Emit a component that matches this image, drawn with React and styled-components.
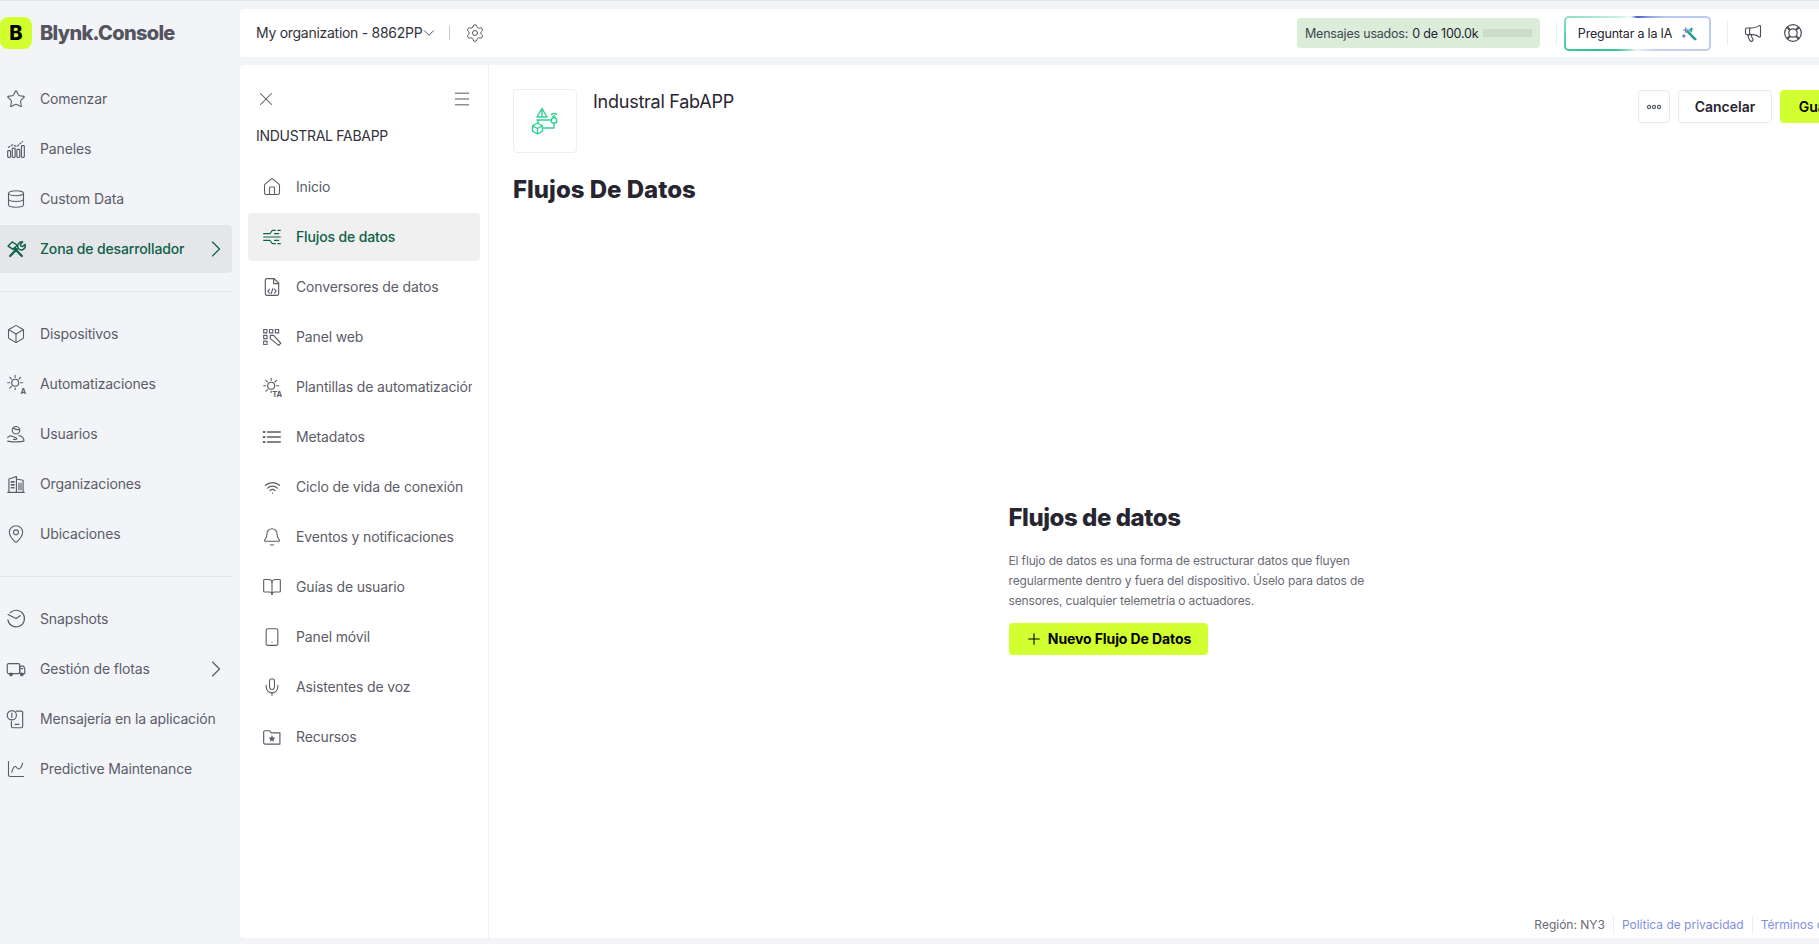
import React from 'react';
import styled, { createGlobalStyle } from 'styled-components';
import {
  Star, Database, Box, MapPin, House, X, Menu, ChevronDown, ChevronRight, Settings, Bell,
  BookOpen, Mic, Smartphone, Plus, Megaphone, Wifi, ChartSpline,
} from 'lucide-react';

const Svg = ({ children, size = 20, ...rest }) => (
  <svg width={size} height={size} viewBox="0 0 24 24" fill="none" stroke="currentColor"
    strokeWidth="1.4" strokeLinecap="round" strokeLinejoin="round" {...rest}>
    {children}
  </svg>
);

const BarsIcon = () => (
  <Svg>
    <rect x="2" y="14" width="3.5" height="8" rx="1" />
    <rect x="7.5" y="11" width="3.5" height="11" rx="1" />
    <rect x="13" y="12.5" width="3.5" height="9.5" rx="1" />
    <rect x="18.5" y="8" width="3.5" height="14" rx="1" />
    <path d="M3 10l5-3 5 2 7-6" strokeDasharray="2 2" />
  </Svg>
);

const ToolsIcon = () => (
  <Svg strokeWidth="1.7">
    <path d="M2.500 8.500l5-5 6 4-5 5z" />
    <path d="M10 11l9 9.500M5 20.500l8-8.500" strokeWidth="2.600" />
    <path d="M20 3.500l-3 3 1 2 2 .5 3-2.500a5 5 0 0 1-7 6 5 5 0 0 1-1-7 5 5 0 0 1 5-2z" />
  </Svg>
);

const SunLabelIcon = ({ label }) => (
  <Svg>
    <circle cx="11" cy="10.5" r="4.2" />
    <path d="M11 1.5v2.5M2 10.5h2.5M17.5 10.5H20M4.6 4.1l1.8 1.8M17.4 4.1l-1.8 1.8M4.6 16.9l1.8-1.8M11 17v1.5" />
    <text x="24" y="24" textAnchor="end" fontSize="9" fontWeight="700" fontFamily="Inter, sans-serif"
      fill="currentColor" stroke="none">{label}</text>
  </Svg>
);

const UsersIcon = () => (
  <Svg>
    <circle cx="12" cy="7.5" r="4.5" />
    <path d="M8.5 4.5c2 2 5 2.5 7.500 2" />
    <path d="M2 16c2-2 4-2 6-1l4 1.500c1.500.5 1.500 2-.5 2H9" />
    <path d="M2 20.500c3 1 15 1.500 19.500 0 .5-3-2-6-6-6.500" />
  </Svg>
);

const BuildingIcon = () => (
  <Svg>
    <path d="M2 22h20M3.500 22V6l9-3v19M12.500 6l8 1.500V22" />
    <path d="M6.500 9.500h3M6.500 13h3M6.500 16.500h3" strokeWidth="2" />
    <path d="M15.500 11v8M18 11v8" />
  </Svg>
);

const SnapshotIcon = () => (
  <Svg>
    <path d="M5 4.500A10 10 0 1 1 2.300 13" />
    <path d="M2.500 6.500L12 11.500l5-3.500" />
  </Svg>
);

const FleetIcon = () => (
  <Svg>
    <rect x="1.500" y="5.500" width="15" height="12" rx="2" />
    <path d="M16.500 8.500h4.500l1.500 3v6h-6z" />
    <circle cx="6" cy="18.500" r="1.500" fill="currentColor" />
    <circle cx="19" cy="18.500" r="1.500" fill="currentColor" />
    <path d="M18 11.500h2" />
  </Svg>
);

const MessagesIcon = () => (
  <Svg>
    <path d="M12 2.500h6.500A1.500 1.500 0 0 1 20 4v17a1.500 1.500 0 0 1-1.500 1.500H8A1.500 1.500 0 0 1 6.500 21v-6" />
    <circle cx="7" cy="7.500" r="5.500" />
    <path d="M7 5v5M11 18.500h4.500" />
  </Svg>
);

const FlowsIcon = () => (
  <Svg>
    <path d="M2 8h7c2 0 2-4 4-4h3M2 12h20M2 16h7c2 0 2 4 4 4h3M19 4h3M19 20h3M15 8h5M15 16h5" />
  </Svg>
);

const WebPanelIcon = () => (
  <Svg>
    <path d="M2 3h4v4H2zM9 3h4v4H9zM16 3h4v4h-4zM2 10h4v4H2zM2 17h4v4H2z" strokeDasharray="2.500 1" />
    <path d="M10 10l4 0 8.500 9.500-2.500 2.500L10 14z" />
  </Svg>
);

const FolderStarIcon = () => (
  <Svg>
    <path d="M2 6a1.500 1.500 0 0 1 1.500-1.500H9l2 2.500h10.500V20.500h-18A1.500 1.500 0 0 1 2 19z" />
    <path d="M12 10.500l1.100 2.300 2.400.3-1.800 1.700.5 2.400-2.200-1.200-2.200 1.200.5-2.400-1.800-1.700 2.400-.3z"
      fill="currentColor" strokeWidth="0.6" />
  </Svg>
);

const FileCodeIcon = () => (
  <Svg>
    <path d="M14.500 2H6a2 2 0 0 0-2 2v16a2 2 0 0 0 2 2h12a2 2 0 0 0 2-2V7.500z" />
    <path d="M14 2v6h6" />
    <path d="M9 14.500l-2 2.500 2 2.500M15 14.500l2 2.500-2 2.500M13 14l-2 6" />
  </Svg>
);

const MetaIcon = () => (
  <Svg strokeWidth="1.6">
    <path d="M6.500 6h15.500M6.500 12h15.500M6.500 18h15.500" />
    <path d="M2 6h1M2 12h1M2 18h1" strokeWidth="2.400" />
  </Svg>
);

const BuoyIcon = () => (
  <Svg size={20} strokeWidth="1.5">
    <circle cx="12" cy="12" r="10" />
    <circle cx="12" cy="12" r="5" />
    <path d="M5 5l3.500 3.500M19 5l-3.500 3.500M5 19l3.500-3.500M19 19l-3.500-3.500" strokeWidth="2.600" strokeLinecap="butt" />
  </Svg>
);

const RingDotsIcon = () => (
  <svg width="16" height="16" viewBox="0 0 16 16" fill="none" stroke="currentColor" strokeWidth="1.100">
    <circle cx="3" cy="8" r="1.600" />
    <circle cx="8" cy="8" r="1.600" />
    <circle cx="13" cy="8" r="1.600" />
  </svg>
);

const WandIcon = () => (
  <svg width="15" height="15" viewBox="0 0 24 24" fill="none" strokeLinecap="round" strokeWidth="2.200">
    <path d="M9 9l12 12" stroke="#2f9a98" strokeWidth="4.500" />
    <path d="M6 3v7M2.500 6.500h7M15 3v4M13 5h4M3 14v4M1 16h4" stroke="#6f80d0" />
    <path d="M12 6l3 3" stroke="#2bc392" strokeWidth="3" />
  </svg>
);

const FlowLogo = () => (
  <svg width="30" height="30" viewBox="0 0 30 30" fill="none" stroke="#35cf95" strokeWidth="1.400"
    strokeLinecap="round" strokeLinejoin="round">
    <path d="M12 2.500l5 8.500H7zM12 2.500V11" />
    <path d="M7 14h14M8 14v3" />
    <circle cx="24" cy="14.500" r="2.800" />
    <path d="M21.500 8.500a3.500 3.500 0 0 1 5 0M22.800 10.500a2 2 0 0 1 2.400 0" />
    <path d="M24 17.500V22H13" />
    <path d="M7.500 17l5 2.800v5.400l-5 2.800-5-2.800v-5.400zM2.500 19.800l5 2.700 5-2.700M7.500 22.500V28" />
  </svg>
);

const lucide = { size: 20, strokeWidth: 1.3 };

const primaryNav = [
  [
    { label: 'Comenzar', icon: <Star {...lucide} /> },
    { label: 'Paneles', icon: <BarsIcon /> },
    { label: 'Custom Data', icon: <Database {...lucide} /> },
    { label: 'Zona de desarrollador', icon: <ToolsIcon />, active: true, arrow: true },
  ],
  [
    { label: 'Dispositivos', icon: <Box {...lucide} /> },
    { label: 'Automatizaciones', icon: <SunLabelIcon label="A" /> },
    { label: 'Usuarios', icon: <UsersIcon /> },
    { label: 'Organizaciones', icon: <BuildingIcon /> },
    { label: 'Ubicaciones', icon: <MapPin {...lucide} /> },
  ],
  [
    { label: 'Snapshots', icon: <SnapshotIcon /> },
    { label: 'Gestión de flotas', icon: <FleetIcon />, arrow: true },
    { label: 'Mensajería en la aplicación', icon: <MessagesIcon /> },
    { label: 'Predictive Maintenance', icon: <ChartSpline {...lucide} /> },
  ],
];

const templateNav = [
  { label: 'Inicio', icon: <House {...lucide} /> },
  { label: 'Flujos de datos', icon: <FlowsIcon />, active: true },
  { label: 'Conversores de datos', icon: <FileCodeIcon /> },
  { label: 'Panel web', icon: <WebPanelIcon /> },
  { label: 'Plantillas de automatización', icon: <SunLabelIcon label="TA" /> },
  { label: 'Metadatos', icon: <MetaIcon /> },
  { label: 'Ciclo de vida de conexión', icon: <Wifi size={17} strokeWidth={1.7} /> },
  { label: 'Eventos y notificaciones', icon: <Bell {...lucide} /> },
  { label: 'Guías de usuario', icon: <BookOpen {...lucide} /> },
  { label: 'Panel móvil', icon: <Smartphone {...lucide} /> },
  { label: 'Asistentes de voz', icon: <Mic {...lucide} /> },
  { label: 'Recursos', icon: <FolderStarIcon /> },
];

export default function App() {
  return (
    <Page>
      <GlobalStyle />
      <Sidebar>
        <Brand>
          <BrandMark>B</BrandMark>
          <BrandName>Blynk.Console</BrandName>
        </Brand>
        {primaryNav.map((group, index) => (
          <NavGroup key={index}>
            {group.map((item) => (
              <NavItem key={item.label} $active={item.active}>
                <NavIcon>{item.icon}</NavIcon>
                <NavLabel>{item.label}</NavLabel>
                {item.arrow && <ChevronRight size={28} strokeWidth={1} />}
              </NavItem>
            ))}
          </NavGroup>
        ))}
      </Sidebar>

      <Content>
        <TopBar>
          <OrgName>My organization - 8862PP</OrgName>
          <ChevronDown size={18} strokeWidth={1.2} color="#44444e" />
          <TopDivider />
          <GearButton><Settings size={20} strokeWidth={1.2} /></GearButton>
          <Usage>
            Mensajes usados: <UsageCount>0 de 100.0k</UsageCount>
            <UsageBar />
          </Usage>
          <BarDivider />
          <AskButton>Preguntar a la IA <WandIcon /></AskButton>
          <BarDivider />
          <TopIcons>
            <Megaphone size={20} strokeWidth={1.4} />
            <BuoyIcon />
          </TopIcons>
        </TopBar>

        <Panel>
          <TemplateNav>
            <NavHead>
              <X size={22} strokeWidth={1.1} />
              <Menu size={20} strokeWidth={1.2} />
            </NavHead>
            <TemplateName>INDUSTRAL FABAPP</TemplateName>
            {templateNav.map((item) => (
              <TemplateItem key={item.label} $active={item.active}>
                <NavIcon>{item.icon}</NavIcon>
                <NavLabel>{item.label}</NavLabel>
              </TemplateItem>
            ))}
          </TemplateNav>

          <Main>
            <MainHead>
              <LogoBox><FlowLogo /></LogoBox>
              <TemplateTitle>Industral FabAPP</TemplateTitle>
              <Actions>
                <MoreButton><RingDotsIcon /></MoreButton>
                <OutlineButton>Cancelar</OutlineButton>
                <LimeButton>Guardar</LimeButton>
              </Actions>
            </MainHead>
            <PageTitle>Flujos De Datos</PageTitle>
            <EmptyArea>
              <EmptyBlock>
                <EmptyTitle>Flujos de datos</EmptyTitle>
                <EmptyText>
                  El flujo de datos es una forma de estructurar datos que fluyen regularmente dentro y
                  fuera del dispositivo. Úselo para datos de sensores, cualquier telemetría o actuadores.
                </EmptyText>
                <NewButton><Plus size={18} strokeWidth={1.5} /> Nuevo Flujo De Datos</NewButton>
              </EmptyBlock>
            </EmptyArea>
            <Footer>
              <FootItem>Región: NY3</FootItem>
              <FootLink>Política de privacidad</FootLink>
              <FootLink>Términos de servicio</FootLink>
            </Footer>
          </Main>
        </Panel>
      </Content>
    </Page>
  );
}

const GlobalStyle = createGlobalStyle`
  html, body {
    margin: 0;
    height: 100%;
    overflow: hidden;
    background: #f2f4f8;
    font-family: Inter, "Liberation Sans", sans-serif;
    color: #272530;
  }
  * {
    box-sizing: border-box;
  }
`

const Page = styled.div`
  display: flex;
  gap: 8px;
  height: 944px;
  border-top: 1px solid #e1e4ee;
  overflow: hidden;
`

const Sidebar = styled.aside`
  flex: none;
  width: 232px;
`

const Brand = styled.div`
  display: flex;
  align-items: center;
  gap: 8px;
  height: 32px;
  margin: 16px 0 26px;
`

const BrandMark = styled.div`
  display: flex;
  align-items: center;
  justify-content: center;
  width: 32px;
  height: 32px;
  border-radius: 8px;
  background: #d1ff2f;
  color: #000;
  font-size: 20px;
  font-weight: 800;
`

const BrandName = styled.div`
  color: #55555f;
  font-size: 20px;
  font-weight: 800;
  letter-spacing: -0.7px;
`

const NavGroup = styled.div`
  display: flex;
  flex-direction: column;
  gap: 2px;
  padding-bottom: 18px;
  margin-bottom: 18px;
  border-bottom: 1px solid #e4e6ec;

  &:last-child {
    border-bottom: 0;
  }
`

const NavItem = styled.div`
  display: flex;
  align-items: center;
  gap: 14px;
  height: 48px;
  padding: 0 2px 0 6px;
  border-radius: 0 4px 4px 0;
  font-size: 14px;
  letter-spacing: -0.14px;
  color: ${(p) => (p.$active ? '#0c6146' : '#5c5c68')};
  background: ${(p) => (p.$active ? '#e4e6ea' : 'transparent')};
  font-weight: ${(p) => (p.$active ? 500 : 400)};
`

const NavIcon = styled.span`
  display: flex;
  flex: none;
  align-items: center;
  justify-content: center;
  width: 20px;
`

const NavLabel = styled.span`
  flex: 1;
  min-width: 0;
  padding-bottom: 2px;
  white-space: nowrap;
  overflow: hidden;
`

const Content = styled.div`
  flex: 1;
  min-width: 0;
  padding-top: 8px;
`

const TopBar = styled.header`
  display: flex;
  align-items: center;
  height: 48px;
  padding: 0 16px;
  background: #fff;
  border-radius: 4px 0 0 4px;
`

const OrgName = styled.div`
  margin: 0 -2px 2px 0;
  font-size: 14px;
  letter-spacing: -0.28px;
  color: #33323c;
`

const TopDivider = styled.span`
  width: 1px;
  height: 14px;
  margin: 0 15px 0 11px;
  background: #c9cbd2;
`

const GearButton = styled.span`
  display: flex;
  color: #55555f;
`

const Usage = styled.div`
  display: flex;
  align-items: center;
  gap: 4px;
  height: 30px;
  margin-left: auto;
  padding: 0 8px;
  width: 243px;
  border-radius: 4px;
  background: #dbecd9;
  font-size: 12.500px;
  letter-spacing: -0.2px;
  color: #3e4750;
  white-space: nowrap;
`

const UsageCount = styled.span`
  color: #1f2430;
`

const UsageBar = styled.span`
  width: 49px;
  height: 8px;
  margin-left: auto;
  background: #cbdcc9;
`

const BarDivider = styled.span`
  width: 1px;
  height: 24px;
  margin: 0 7px 0 16px;
  background: #eceef2;
`

const AskButton = styled.button`
  display: flex;
  align-items: center;
  justify-content: center;
  gap: 10px;
  width: 147px;
  height: 35px;
  padding: 0;
  border: 2px solid transparent;
  border-radius: 5px;
  background:
    linear-gradient(#fff, #fff) padding-box,
    conic-gradient(#4a63d6 5deg, #8c9fe6 35deg, #b9c6ef 60deg, #c7d2f2 130deg, #f2f6f8 185deg,
      #3cc79a 232deg, #2bc392 250deg, #72d9b8 275deg, #b6ebd8 295deg, #f5fbf9 338deg, #4a63d6 358deg) border-box;
  font-family: inherit;
  font-size: 12.500px;
  letter-spacing: -0.2px;
  color: #272530;
`

const TopIcons = styled.div`
  display: flex;
  align-items: center;
  gap: 20px;
  margin-left: 8px;
  color: #4e4e58;
`

const Panel = styled.div`
  display: flex;
  height: 873px;
  margin-top: 8px;
  background: #fff;
  border-radius: 4px 0 0 4px;
  overflow: hidden;
`

const TemplateNav = styled.nav`
  flex: none;
  width: 249px;
  padding: 0 8px;
  border-right: 1px solid #f0f1f4;
`

const NavHead = styled.div`
  display: flex;
  align-items: center;
  justify-content: space-between;
  height: 22px;
  margin: 23px 8px 0 7px;
  color: #55555f;
`

const TemplateName = styled.div`
  margin: 16px 0 17px 8px;
  height: 20px;
  line-height: 20px;
  font-size: 14px;
  letter-spacing: -0.3px;
  color: #33323c;
`

const TemplateItem = styled.div`
  display: flex;
  align-items: center;
  gap: 14px;
  height: 48px;
  margin-bottom: 2px;
  padding: 0 8px 0 14px;
  border-radius: 4px;
  font-size: 14px;
  letter-spacing: -0.14px;
  color: ${(p) => (p.$active ? '#0c6146' : '#5c5c68')};
  background: ${(p) => (p.$active ? '#f0f0f1' : 'transparent')};
  font-weight: ${(p) => (p.$active ? 500 : 400)};
`

const Main = styled.main`
  display: flex;
  flex: none;
  flex-direction: column;
  width: 1400px;
`

const MainHead = styled.div`
  display: flex;
  align-items: flex-start;
  padding: 24px 17px 0 24px;
`

const LogoBox = styled.div`
  display: flex;
  align-items: center;
  justify-content: center;
  width: 64px;
  height: 64px;
  border: 1px solid #eeeff2;
  border-radius: 4px;
`

const TemplateTitle = styled.div`
  margin: 1px 0 0 16px;
  font-size: 18px;
  line-height: 24px;
  letter-spacing: -0.25px;
  color: #272530;
`

const Actions = styled.div`
  display: flex;
  gap: 8px;
  margin: 1px 0 0 auto;
`

const MoreButton = styled.button`
  display: flex;
  align-items: center;
  justify-content: center;
  width: 32px;
  height: 33px;
  padding: 0;
  border: 1px solid #e8e9ee;
  border-radius: 4px;
  background: #fff;
  color: #4d5260;
`

const OutlineButton = styled.button`
  width: 94px;
  height: 33px;
  padding: 0;
  border: 1px solid #e8e9ee;
  border-radius: 4px;
  background: #fff;
  font-family: inherit;
  font-size: 14px;
  font-weight: 600;
  color: #272530;
`

const LimeButton = styled.button`
  width: 92px;
  height: 33px;
  padding: 0;
  border: 0;
  border-radius: 4px;
  background: #d1ff2f;
  font-family: inherit;
  font-size: 14px;
  font-weight: 600;
  color: #000;
`

const PageTitle = styled.h1`
  margin: 22px 24px 0;
  font-size: 24px;
  line-height: 30px;
  font-weight: 800;
  letter-spacing: 0;
  color: #272530;
`

const EmptyArea = styled.div`
  display: flex;
  flex: 1;
  align-items: center;
  justify-content: center;
  padding-top: 34px;
`

const EmptyBlock = styled.div`
  width: 360px;
  margin-left: -1px;
`

const EmptyTitle = styled.h2`
  margin: 0 0 16px;
  font-size: 24px;
  line-height: 34px;
  font-weight: 800;
  letter-spacing: -0.45px;
  color: #272530;
`

const EmptyText = styled.p`
  margin: 0 0 12px;
  font-size: 12px;
  line-height: 20px;
  letter-spacing: -0.14px;
  color: #6a6a74;
`

const NewButton = styled.button`
  display: flex;
  align-items: center;
  justify-content: center;
  gap: 5px;
  width: 199px;
  height: 32px;
  padding: 0;
  border: 0;
  border-radius: 4px;
  background: #d1ff2f;
  font-family: inherit;
  font-size: 14px;
  font-weight: 700;
  letter-spacing: -0.1px;
  color: #000;
`

const Footer = styled.footer`
  display: flex;
  justify-content: flex-end;
  height: 22px;
  padding-right: 2px;
  font-size: 12px;
`

const FootItem = styled.span`
  padding: 0 8px;
  height: 18px;
  line-height: 18px;
  color: #6a6a74;
`

const FootLink = styled(FootItem)`
  border-left: 1px solid #eceef2;
  color: #7f8fe0;
`
